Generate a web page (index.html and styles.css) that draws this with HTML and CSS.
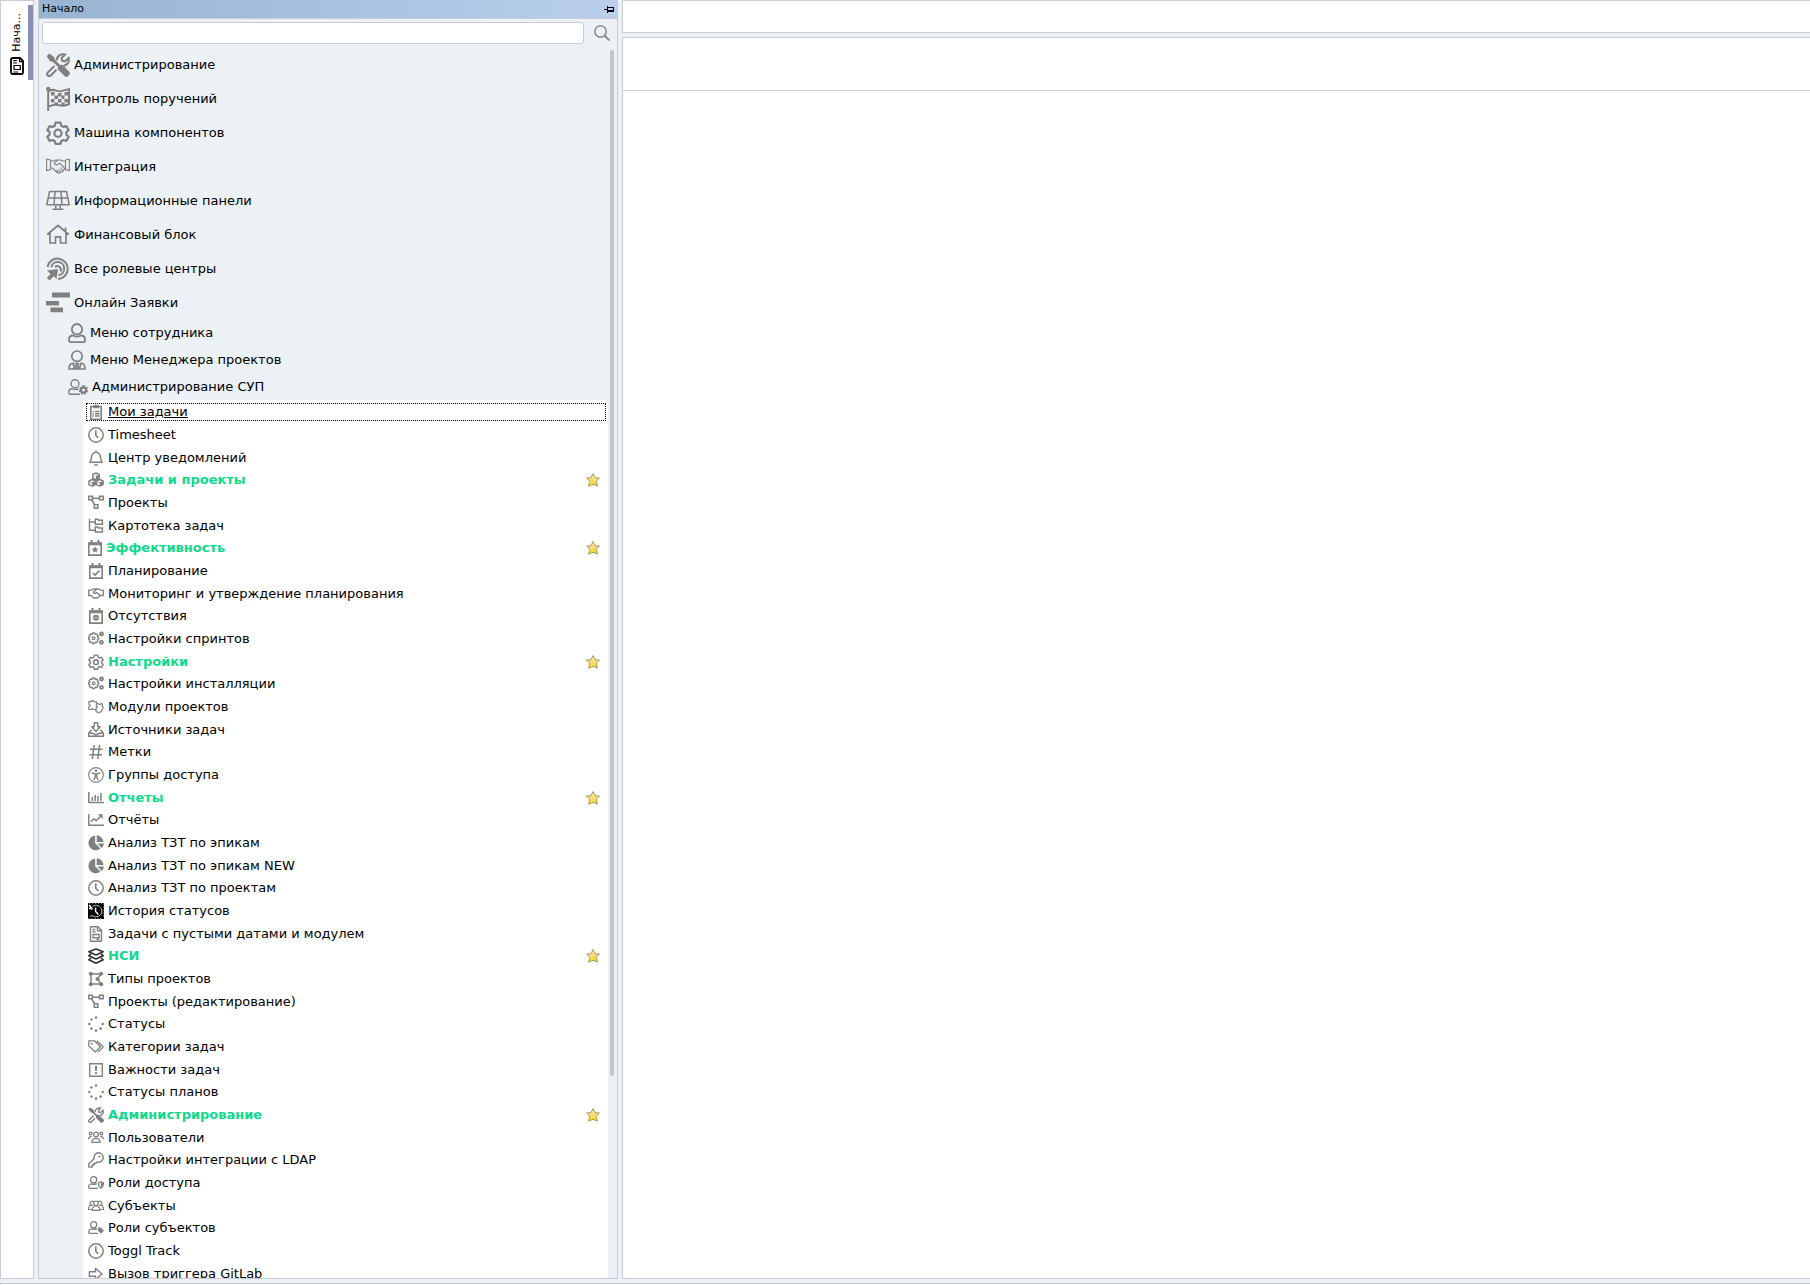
FILE: index.html
```html
<!DOCTYPE html>
<html lang="ru">
<head>
<meta charset="utf-8">
<title>Начало</title>
<link rel="stylesheet" href="styles.css">
</head>
<body>
<svg class="sprite" aria-hidden="true">
  <symbol id="tools" viewBox="0 0 24 24"><path fill="currentColor" stroke="none" d="M.6 3.200L3.200.6l5 3.400.9 3 5 5c1-.6 2.200-.3 3 .4l6 6a2.500 2.500 0 0 1 0 3.600l-1 1a2.500 2.500 0 0 1-3.600 0l-6-6c-.8-.8-1-2-.4-3L7 9l-3-.9z"/><path fill="none" stroke="currentColor" stroke-width="2.100" d="M10.800 7.500C10.400 3.600 14.400.2 19 1.600L15.600 5l.6 2.800 2.800.6L22.600 5c1.200 4.500-2 7.600-5.200 7.600M8.300 13l-6.500 6.400a2.100 2.100 0 0 0 3 3l5.700-5.600"/></symbol>
  <symbol id="flag" viewBox="0 0 24 24"><circle cx="2.200" cy="2" r="2.200" fill="currentColor" stroke="none"/><path fill="none" stroke="currentColor" stroke-width="2" d="M2.200 2v22M3 4c5-3.500 8 1.500 12 .2 3-.8 4.500-1.700 8-2v15c-4 1.500-6 2.200-9 1.200-4-1.300-7-.8-11 1"/><path fill="currentColor" stroke="none" d="M5 5h3.500v3.500H5zM12 6h3.500v3.500H12zM18.500 5H22v3.500h-3.500zM8.500 8.500H12V12H8.500zM15.500 8.500h3V12h-3zM5 12h3.500v3.500H5zM12 12h3.500v3.500H12zM18.500 12H22v3.500h-3.500zM8.500 15.500H12V18H8.500zM15.500 15.500h3V18h-3z"/></symbol>
  <symbol id="gear" viewBox="0 0 24 24"><path fill="none" stroke="currentColor" stroke-width="2.200" stroke-linejoin="round" d="M9.500 1.700h5l.7 3 2 1.200 3.100-.9 2.400 4.200-2.300 2v2.400l2.300 2.100-2.400 4.200-3.100-.9-2 1.200-.7 2.600h-5l-.7-2.600-2-1.200-3.100.9-2.400-4.200 2.300-2.100v-2.400l-2.300-2L3.700 5l3.100.9 2-1.200z"/><circle cx="12" cy="12.200" r="3.600" fill="none" stroke="currentColor" stroke-width="2.200"/></symbol>
  <symbol id="shake" viewBox="0 0 24 24"><path fill="none" stroke="currentColor" stroke-width="1.100" stroke-linejoin="round" d="M.6 4l3.900 1v9.600l-3.900 1zM23.400 4l-3.900 1v9.600l3.900 1zM4.500 6h3l2.200-1h5L16.500 6h3M4.500 13h2l4.500 4.500 2 .6 1.500-.5 1.600-.8 1.400-1.300 1-2h1.500M11.500 5.200L8.300 8.400c.4 2.200 3 2.200 4.500.2l1.200-.2 4.500 4.600M10.500 15l1.500 2M12.500 14l2 3M14.500 12.500l2 3"/></symbol>
  <symbol id="solar" viewBox="0 0 24 24"><path fill="none" stroke="currentColor" stroke-width="1.500" stroke-linejoin="round" d="M3.500 2.500h17l2.700 13.300H.8zM2.300 9h19.400M9 2.500l-1 13M15 2.500l1 13M9.800 16v4M14.200 16v4M6.500 20.300h11"/></symbol>
  <symbol id="home" viewBox="0 0 24 24"><path fill="none" stroke="currentColor" stroke-width="1.700" stroke-linejoin="round" d="M1.200 11.500L12 2.500l10.800 9M4 9.500v10.500h5.500v-6.200h5V20H20V9.500M19.500 9V4.500"/></symbol>
  <symbol id="target" viewBox="0 0 24 24"><path fill="none" stroke="currentColor" stroke-width="2" d="M1.500 10A10.200 10.200 0 1 1 12 22M5.200 10.200a6.600 6.600 0 1 1 7.400 8M9 10a3.600 3.600 0 0 1 5.500 4.500"/><path fill="currentColor" stroke="none" d="M1 13.500l11-1.500-1.500 10-2.700-2.800L3.500 23.500.8 20.800 4.600 17z"/></symbol>
  <symbol id="bars" viewBox="0 0 24 24"><path fill="currentColor" stroke="none" d="M6 1.500h18v5H6zM0 10h13v4.600H0zM4.500 16.600H17v4.600H4.500z"/></symbol>
  <symbol id="user" viewBox="0 0 18 20"><path fill="none" stroke="currentColor" stroke-width="1.800" d="M9 1a4.600 4.600 0 0 1 0 10.400A4.600 4.600 0 0 1 9 1zM5.500 12.500c2.200 1.400 4.800 1.400 7 0 2.500 0 4.600 1.500 4.600 4.200 0 1.500-.7 2.400-1.600 2.400h-13c-.9 0-1.600-.9-1.600-2.400 0-2.700 2.100-4.200 4.600-4.200z"/></symbol>
  <symbol id="manager" viewBox="0 0 18 20"><path fill="none" stroke="currentColor" stroke-width="1.700" stroke-linejoin="round" d="M9 1a4.600 4.600 0 0 1 0 10.400A4.600 4.600 0 0 1 9 1zM5 13c-3 .4-4 2-4 6h5.600zM13 13c3 .4 4 2 4 6h-5.600zM7.500 13.500h3l-.8 2.300.8 3.200h-3l.8-3.200z"/></symbol>
  <symbol id="usergear" viewBox="0 0 20 16"><path fill="none" stroke="currentColor" stroke-width="1.400" d="M7 .8a3.600 3.600 0 0 1 0 8A3.600 3.600 0 0 1 7 .8zM10.500 10c-1 0-2 .5-3.500.5S5 9.600 3.500 9.800C1.600 10.200.7 11.700.7 13.500c0 1 .4 1.700 1.200 1.700h10"/><circle cx="15.500" cy="11" r="2.600" fill="none" stroke="currentColor" stroke-width="2.200"/><path stroke="currentColor" stroke-width="1.600" stroke-dasharray="1.600 1.700" fill="none" d="M15.500 7a4 4 0 0 1 0 8 4 4 0 0 1 0-8z"/></symbol>
  <symbol id="clip" viewBox="0 0 16 16"><path fill="none" stroke="currentColor" stroke-width="1.600" d="M2.800 2.500h10.400v12.700H2.800zM7 7.500h4.500M7 9.800h4.500M7 12h4.500M4.600 7.500H6M4.600 9.800H6M4.600 12H6"/><path fill="currentColor" d="M5 1.300h1.800a1.300 1.300 0 0 1 2.400 0H11v3H5z"/></symbol>
  <symbol id="clock" viewBox="0 0 16 16"><circle cx="8" cy="8" r="7.200" fill="none" stroke="currentColor" stroke-width="1.500"/><path fill="none" stroke="currentColor" stroke-width="1.600" d="M7.800 3.300v5.200l2.600 2.300"/></symbol>
  <symbol id="bell" viewBox="0 0 16 16"><path fill="none" stroke="currentColor" stroke-width="1.500" stroke-linejoin="round" d="M8 .5v2M1.800 12.200h12.400C12.800 10.800 12.500 9.500 12.500 7A4.500 4.500 0 0 0 8 2.300 4.500 4.500 0 0 0 3.500 7c0 2.500-.3 3.800-1.700 5.200zM6.400 14.200c.6 1.300 2.600 1.300 3.200 0"/></symbol>
  <symbol id="cubes" viewBox="0 0 16 16"><path fill="#fff" stroke="currentColor" stroke-width="1.500" stroke-linejoin="round" d="M8 1l3.200 1.400v3.700L8 7.600 4.800 6.100V2.400zM4.200 7.500l3.300 1.400v3.700l-3.300 1.600L.9 12.600V8.900zM11.800 7.500l3.300 1.400v3.700l-3.300 1.600-3.300-1.600V8.900z"/><path fill="currentColor" d="M4.800 2.500L8 4l3.200-1.500v3.600L8 4.500zM8 4l3.200-1.500v3.600L8 7.600zM4.200 10.300l3.300-1.400v3.700l-3.300 1.600zM11.800 10.300l3.300-1.400v3.700l-3.300 1.600zM.9 8.800l3.300 1.500v1.300zM8.500 8.800l3.300 1.500v1.300z"/></symbol>
  <symbol id="nodes" viewBox="0 0 16 16"><path fill="none" stroke="currentColor" stroke-width="1.500" d="M.8 1.300h3.600v3.400H.8zM11.600 1.300h3.600v3.400h-3.600zM6.200 9.800h3.600v3.400H6.200zM4.200 3.200h7.600M3.400 4.800L7 10"/></symbol>
  <symbol id="tree" viewBox="0 0 16 16"><path fill="none" stroke="currentColor" stroke-width="1.400" d="M1.500.8v11.400H7M1.500 4H7M7.300 1.300h2.400l1 1h3.700v4H7.300zM7.300 9h2.400l1 1h3.700v4H7.300z"/></symbol>
  <symbol id="calendar" viewBox="0 0 16 16"><path fill="none" stroke="currentColor" stroke-width="1.600" d="M1.800 3.500h12.400v11.600H1.800z"/><path fill="currentColor" d="M1 2.300h14v2.900H1zM3.500 0h2v3h-2zM10.500 0h2v3h-2z"/></symbol>
  <symbol id="calstar" viewBox="1 0 14 16"><use href="#calendar" width="16" height="16"/><path fill="currentColor" d="M8 6.300l1 2.200 2.400.3-1.800 1.600.5 2.400L8 11.600l-2.100 1.200.5-2.400-1.800-1.600L7 8.500z"/></symbol>
  <symbol id="calcheck" viewBox="0 0 16 16"><use href="#calendar" width="16" height="16"/><path fill="none" stroke="currentColor" stroke-width="1.600" d="M4.800 9.800l2.200 2.200 4.400-4.400"/></symbol>
  <symbol id="calminus" viewBox="0 0 16 16"><use href="#calendar" width="16" height="16"/><circle cx="8" cy="9.800" r="3" fill="currentColor"/><path stroke="#ddd" d="M6.500 9.800h3"/></symbol>
  <symbol id="shakesm" viewBox="0 0 16 16"><path fill="none" stroke="currentColor" stroke-width="1.300" stroke-linejoin="round" d="M.7 3.500v6.700M15.300 3.500v6.700M1 4.300l2.200-.2L5.500 3h5l2.300 1.100 2.200.2M1 9.500h2L6 12h3.500l3.300-2.500H15M8.800 3.200L5.500 5.900c0 1.700 1.900 1.700 3.300.6l3.500 3.200"/></symbol>
  <symbol id="gears" viewBox="0 0 16 16"><path fill="none" stroke="currentColor" stroke-width="1.400" stroke-linejoin="round" d="M4.700 2h1.900l.5 1.300 1.300-.3 1.500 1.500-.5 1.300 1.100.6v1.800l-1.100.6.5 1.400-1.400 1.400-1.400-.3-.6 1.200H4.700l-.6-1.200-1.400.3-1.400-1.400.5-1.400-1.100-.6V6.400l1.100-.6-.5-1.300L2.800 3l1.300.3z"/><circle cx="5.600" cy="7.300" r="1.400" fill="none" stroke="currentColor" stroke-width="1.200"/><g fill="none" stroke="currentColor" stroke-width="1.800"><circle cx="13.500" cy="3" r="1.500"/><circle cx="13.500" cy="11.300" r="1.500"/></g></symbol>
  <symbol id="puzzle" viewBox="0 0 16 16"><path fill="none" stroke="currentColor" stroke-width="1.200" stroke-linejoin="round" d="M8 10.500H5l-.8-1-1.200 1H.8V7.800l1.400-.6-.6-1.500-.8-.4V2.600h2.500L4 1.400l1.500.2.4 1.200h2.600v1.900M8.400 4.700l2-.2.5 1h1.400l.6-1.200 1.400.8v2.400l.8.8-.3 1.500-.8.600-.4 2.200-2 .6-.6.6h-1.200l-.5-1-1.300-.2V9.300l1.200-.6-.2-1.500H8.300z"/></symbol>
  <symbol id="inbox" viewBox="0 0 16 16"><path fill="none" stroke="currentColor" stroke-width="1.400" stroke-linejoin="round" d="M6.300.8h3.400v4h2.500L8 9.500 3.800 4.800h2.500zM4 8.500H2.800L.7 11.200v3h14.600v-3l-2.100-2.700H12M.7 11.300h4.600l1 1.200h3.400l1-1.200h4.600"/></symbol>
  <symbol id="hash" viewBox="0 0 16 16"><path fill="none" stroke="currentColor" stroke-width="1.500" d="M6.200 1L4.400 15M11.600 1L9.800 15M2 5.300h12.500M1.500 10.700H14"/></symbol>
  <symbol id="access" viewBox="0 0 16 16"><circle cx="8" cy="8" r="7.300" fill="none" stroke="currentColor" stroke-width="1.200"/><circle cx="8" cy="3.800" r="1.300" fill="currentColor"/><path fill="none" stroke="currentColor" stroke-width="1.500" d="M3.800 6.100l4.200.8 4.200-.8M7.400 6.500v3.300l-1.600 3M8.600 6.500v3.300l1.600 3"/></symbol>
  <symbol id="chart" viewBox="0 0 16 16"><path fill="none" stroke="currentColor" stroke-width="1.500" d="M.8 2v10.500H16M4.300 7v4M7.200 5v6M10 6v5M12.900 3v8"/></symbol>
  <symbol id="line" viewBox="0 0 16 16"><path fill="none" stroke="currentColor" stroke-width="1.500" d="M.8 2v11.300H16M2.800 9.800L6 6.700l2.200 2L13 4"/><path fill="currentColor" d="M10 2.300h4.700V7z"/></symbol>
  <symbol id="pie" viewBox="0 0 16 16"><path fill="currentColor" d="M7.200.8v7.400l5.200 5.200A7.200 7.200 0 1 1 7.200.8zM8.700.3a7 7 0 0 1 6.700 6.800H8.700zM9.500 8.500H16a7 7 0 0 1-2.500 4.500z"/></symbol>
  <symbol id="history" viewBox="0 0 16 16"><path fill="#000" d="M0 0h16v16H0z"/><path fill="none" stroke="#ccc" stroke-width="1" d="M4.500 3.500a6 6 0 0 1 9.300 3.500 6 6 0 0 1-9.800 5.500L2 13.500"/><path fill="none" stroke="#fff" stroke-width="1.400" d="M7.600 4.500v4l2.800 3M1.300 2l3 4.500M1 5.500h3.500"/><path stroke="#999" stroke-dasharray="1 2" d="M.5 15.500h15M15.500.5v15M1 .5h15"/></symbol>
  <symbol id="doc" viewBox="0 0 16 16"><path fill="none" stroke="currentColor" stroke-width="1.400" stroke-linejoin="round" d="M2.500.8H10l3.500 3.500v10.900h-11zM9.500 1v3.800h4M4.500 3.500h3M4.500 5.800h3M5 8.500h6.200v3.200H5zM8.500 13.400h3"/></symbol>
  <symbol id="layers" viewBox="0 0 16 16"><path fill="none" stroke="#333" stroke-width="1.600" stroke-linejoin="round" d="M8 .9l7.200 2.900L8 6.900.8 3.800zM3 6L.8 7.700 8 11l7.200-3.300L13 6M3 10L.8 11.800 8 15.200l7.200-3.400L13 10"/></symbol>
  <symbol id="poly" viewBox="0 0 16 16"><path fill="none" stroke="currentColor" stroke-width="1.500" d="M3 3h10L9.500 8l3.500 5H3z"/><g fill="currentColor"><circle cx="2.800" cy="2.800" r="2"/><circle cx="13.200" cy="2.800" r="2"/><circle cx="9.500" cy="8" r="2"/><circle cx="2.800" cy="13.200" r="2"/><circle cx="13.200" cy="13.200" r="2"/></g></symbol>
  <symbol id="spinner" viewBox="0 0 16 16"><g fill="currentColor"><circle cx="8" cy="1.500" r="1.200"/><circle cx="3.400" cy="3.400" r="1.200"/><circle cx="1.300" cy="8" r="1.200"/><circle cx="3.400" cy="12.600" r="1.300"/><circle cx="8" cy="14.600" r="1.300"/><circle cx="12.600" cy="12.600" r="1.300"/><circle cx="14.700" cy="8" r="1.200"/></g></symbol>
  <symbol id="tags" viewBox="0 0 16 16"><path fill="none" stroke="currentColor" stroke-width="1.300" stroke-linejoin="round" d="M.8 1.800h5.700l6 6L7.300 13 .8 6.900zM8.800 1.800l6.500 6.100-5 5.100"/><circle cx="3.700" cy="4.700" r="1" fill="currentColor"/></symbol>
  <symbol id="alert" viewBox="0 0 16 16"><path fill="none" stroke="currentColor" stroke-width="1.400" d="M1.700 1.700h12.600v12.600H1.700z"/><path fill="currentColor" d="M6.800 4h2.400l-.4 5H7.200zM7 10h2v2H7z"/></symbol>
  <symbol id="users" viewBox="0 0 16 16"><g fill="none" stroke="currentColor" stroke-width="1.300"><circle cx="8" cy="4.500" r="2.300"/><circle cx="2.700" cy="3.500" r="1.400"/><circle cx="13.300" cy="3.500" r="1.400"/><path d="M4 12.300c0-2.800 1.300-3.900 4-3.900s4 1.100 4 3.900zM.6 9.200c0-1.900.8-2.600 3.200-2.500M15.400 9.200c0-1.900-.8-2.600-3.200-2.500"/></g></symbol>
  <symbol id="group" viewBox="0 0 16 16"><g fill="none" stroke="currentColor" stroke-width="1.200"><path d="M8 3a2.300 2.300 0 0 1 0 4.600A2.300 2.300 0 0 1 8 3zM4.300 12.300c0-3.200 1-4.300 3.700-4.300s3.700 1.100 3.700 4.300zM5.300 6.800a2 2 0 1 1 .3-3M10.700 6.800a2 2 0 1 0-.3-3M4 11.500H.6c0-3 .5-4 2.400-4.300M12 11.500h3.400c0-3-.5-4-2.400-4.300"/></g></symbol>
  <symbol id="key" viewBox="0 0 16 16"><path fill="none" stroke="currentColor" stroke-width="1.400" stroke-linejoin="round" d="M10.500.8a4.700 4.700 0 1 1-1.300 9.200L7.800 11.300H6v1.700H4.300v2.100H.8v-3.200l5.400-5.400A4.700 4.700 0 0 1 10.500.8z"/><circle cx="11.500" cy="4.500" r="1.100" fill="currentColor"/></symbol>
  <symbol id="person" viewBox="0 0 16 16"><path fill="none" stroke="currentColor" stroke-width="1.300" d="M5.600 1.700a2.900 2.900 0 0 1 0 6.200 2.900 2.900 0 0 1 0-6.200zM9 8.800c-1 0-1.700.5-3.400.5S3.500 8.700 2.500 9C1.200 9.400.7 10.500.7 12c0 .9.300 1.300.9 1.300H10"/></symbol>
  <symbol id="shield" viewBox="0 0 16 16"><use href="#person" width="16" height="16"/><path fill="none" stroke="currentColor" stroke-width="1.200" d="M13 6.700l2.500 1c0 3-.8 4.600-2.500 5.600-1.700-1-2.500-2.600-2.500-5.600z"/><path fill="currentColor" d="M13 7v6c1.400-.9 2-2.600 2-5z"/></symbol>
  <symbol id="persontag" viewBox="0 0 16 16"><use href="#person" width="16" height="16"/><path fill="currentColor" d="M9.800 7.500h3l3.200 3.200-3 3-3.200-3.100z"/></symbol>
  <symbol id="arrow" viewBox="0 0 16 16"><path fill="none" stroke="currentColor" stroke-width="1.400" stroke-linejoin="round" d="M1.300 5.800h6.200V2.300L14 8l-6.500 5.700v-3.500H1.300z"/></symbol>
  <linearGradient id="gold" x1="0" y1="0" x2="0" y2="1"><stop offset="0" stop-color="#fdf0b0"/><stop offset=".5" stop-color="#f8dc72"/><stop offset="1" stop-color="#fbd60a"/></linearGradient>
  <symbol id="star" viewBox="0 0 14 14"><path fill="url(#gold)" stroke="#a89a68" stroke-width="1" stroke-linejoin="round" d="M7 .6l2 4 4.500.5-3.300 3.100 1.300 5L7 11.300l-4.500 1.900 1.300-5L.5 5.100 5 4.600z"/></symbol>
</svg>

<div class="app">
  <nav class="rail" aria-label="Вкладки">
    <button class="rail-tab" type="button">
      <span class="rail-label">Нача...</span>
      <svg class="rail-icon" viewBox="0 0 14 18"><path fill="none" stroke="#000" stroke-width="1.800" stroke-linejoin="round" d="M3 1h7l3 3v11.500c0 .8-.7 1.500-1.500 1.500H2.500C1.700 17 1 16.300 1 15.500V3c0-1.100.9-2 2-2z"/><path fill="none" stroke="#000" stroke-width="1.200" d="M9.500 1v3.700H13M3.200 3.600h3.600M3.200 6h3.600M4 8.500h6.300v4H4zM3.200 15h5"/></svg>
    </button>
  </nav>

  <aside class="panel">
    <header class="panel-head">
      <h1 class="panel-title">Начало</h1>
      <button class="pin" type="button" aria-label="Закрепить"><svg viewBox="0 0 10 7"><path fill="#000" d="M0 3h3V0h1v1h6v5H4v1H3V4H0zM4 2v2h5V2z"/></svg></button>
    </header>
    <form class="search">
      <input class="search-box" type="text" aria-label="Поиск">
      <button class="search-go" type="button" aria-label="Найти"><svg viewBox="0 0 16 16"><circle cx="6.500" cy="6.500" r="5.700" fill="none" stroke="#888" stroke-width="1.500"/><path stroke="#888" stroke-width="1.800" d="M10.500 10.500l5 5"/></svg></button>
    </form>
    <div class="scroller">
      <div class="menu">
        <ul class="level-1">
          <li><a href="#"><svg><use href="#tools"/></svg>Администрирование</a></li>
          <li><a href="#"><svg><use href="#flag"/></svg>Контроль поручений</a></li>
          <li><a href="#"><svg><use href="#gear"/></svg>Машина компонентов</a></li>
          <li><a href="#"><svg><use href="#shake"/></svg>Интеграция</a></li>
          <li><a href="#"><svg><use href="#solar"/></svg>Информационные панели</a></li>
          <li><a href="#"><svg><use href="#home"/></svg>Финансовый блок</a></li>
          <li><a href="#"><svg><use href="#target"/></svg>Все ролевые центры</a></li>
          <li><a href="#"><svg><use href="#bars"/></svg>Онлайн Заявки</a></li>
        </ul>
        <ul class="level-2">
          <li><a href="#"><svg><use href="#user"/></svg>Меню сотрудника</a></li>
          <li><a href="#"><svg><use href="#manager"/></svg>Меню Менеджера проектов</a></li>
          <li><a href="#"><svg class="wide"><use href="#usergear"/></svg>Администрирование СУП</a></li>
        </ul>
        <ul class="level-3">
          <li><a class="current" href="#"><svg><use href="#clip"/></svg><span>Мои задачи</span></a></li>
          <li><a href="#"><svg><use href="#clock"/></svg>Timesheet</a></li>
          <li><a href="#"><svg><use href="#bell"/></svg>Центр уведомлений</a></li>
          <li><a class="group" href="#"><svg><use href="#cubes"/></svg>Задачи и проекты<svg class="star"><use href="#star"/></svg></a></li>
          <li><a href="#"><svg><use href="#nodes"/></svg>Проекты</a></li>
          <li><a href="#"><svg><use href="#tree"/></svg>Картотека задач</a></li>
          <li><a class="group" href="#"><svg class="narrow"><use href="#calstar"/></svg>Эффективность<svg class="star"><use href="#star"/></svg></a></li>
          <li><a href="#"><svg><use href="#calcheck"/></svg>Планирование</a></li>
          <li><a href="#"><svg><use href="#shakesm"/></svg>Мониторинг и утверждение планирования</a></li>
          <li><a href="#"><svg><use href="#calminus"/></svg>Отсутствия</a></li>
          <li><a href="#"><svg><use href="#gears"/></svg>Настройки спринтов</a></li>
          <li><a class="group" href="#"><svg><use href="#gear"/></svg>Настройки<svg class="star"><use href="#star"/></svg></a></li>
          <li><a href="#"><svg><use href="#gears"/></svg>Настройки инсталляции</a></li>
          <li><a href="#"><svg><use href="#puzzle"/></svg>Модули проектов</a></li>
          <li><a href="#"><svg><use href="#inbox"/></svg>Источники задач</a></li>
          <li><a href="#"><svg><use href="#hash"/></svg>Метки</a></li>
          <li><a href="#"><svg><use href="#access"/></svg>Группы доступа</a></li>
          <li><a class="group" href="#"><svg><use href="#chart"/></svg>Отчеты<svg class="star"><use href="#star"/></svg></a></li>
          <li><a href="#"><svg><use href="#line"/></svg>Отчёты</a></li>
          <li><a href="#"><svg><use href="#pie"/></svg>Анализ ТЗТ по эпикам</a></li>
          <li><a href="#"><svg><use href="#pie"/></svg>Анализ ТЗТ по эпикам NEW</a></li>
          <li><a href="#"><svg><use href="#clock"/></svg>Анализ ТЗТ по проектам</a></li>
          <li><a href="#"><svg><use href="#history"/></svg>История статусов</a></li>
          <li><a href="#"><svg><use href="#doc"/></svg>Задачи с пустыми датами и модулем</a></li>
          <li><a class="group" href="#"><svg><use href="#layers"/></svg>НСИ<svg class="star"><use href="#star"/></svg></a></li>
          <li><a href="#"><svg><use href="#poly"/></svg>Типы проектов</a></li>
          <li><a href="#"><svg><use href="#nodes"/></svg>Проекты (редактирование)</a></li>
          <li><a href="#"><svg><use href="#spinner"/></svg>Статусы</a></li>
          <li><a href="#"><svg><use href="#tags"/></svg>Категории задач</a></li>
          <li><a href="#"><svg><use href="#alert"/></svg>Важности задач</a></li>
          <li><a href="#"><svg><use href="#spinner"/></svg>Статусы планов</a></li>
          <li><a class="group" href="#"><svg><use href="#tools"/></svg>Администрирование<svg class="star"><use href="#star"/></svg></a></li>
          <li><a href="#"><svg><use href="#users"/></svg>Пользователи</a></li>
          <li><a href="#"><svg><use href="#key"/></svg>Настройки интеграции с LDAP</a></li>
          <li><a href="#"><svg><use href="#shield"/></svg>Роли доступа</a></li>
          <li><a href="#"><svg><use href="#group"/></svg>Субъекты</a></li>
          <li><a href="#"><svg><use href="#persontag"/></svg>Роли субъектов</a></li>
          <li><a href="#"><svg><use href="#clock"/></svg>Toggl Track</a></li>
          <li><a href="#"><svg><use href="#arrow"/></svg>Вызов триггера GitLab</a></li>
        </ul>
      </div>
      <div class="thumb"></div>
    </div>
  </aside>

  <main class="work">
    <div class="work-bar"></div>
    <div class="work-body"><div class="work-tools"></div></div>
  </main>
</div>
<footer class="status"></footer>
</body>
</html>
```
FILE: styles.css
```css
* { box-sizing: border-box; }

body {
  margin: 0;
  height: 100vh;
  display: flex;
  flex-direction: column;
  gap: 4px;
  overflow: hidden;
  background: #edf1f6;
  color: #000;
  font: 13px/16px Verdana, "DejaVu Sans", sans-serif;
}

ul { list-style: none; margin: 0; padding: 0; }
a { color: inherit; text-decoration: none; }
button { padding: 0; border: 0; background: none; font: inherit; color: inherit; }
svg { display: block; flex: none; }
.sprite { position: absolute; width: 0; height: 0; }

.app {
  flex: 1;
  min-height: 0;
  display: grid;
  grid-template-columns: 34px 580px 1fr;
  gap: 4px;
}

/* Left rail with the vertical tab */
.rail { border: 1px solid #c9ccd6; background: #fff; }
.rail-tab {
  width: 100%;
  height: 75px;
  margin-top: 4px;
  padding: 8px 0 5px 9px;
  border-right: 5px solid #8b8fb5;
  display: flex;
  flex-direction: column;
  justify-content: flex-end;
  align-items: flex-start;
  gap: 5px;
}
.rail-label {
  writing-mode: vertical-rl;
  transform: rotate(180deg);
  font-size: 11px;
  line-height: 14px;
}
.rail-icon { width: 14px; height: 18px; }

/* Menu panel */
.panel {
  min-height: 0;
  display: flex;
  flex-direction: column;
  border: 1px solid #c9ccd6;
  border-top: 0;
  background: #ecf1f6;
}
.panel-head {
  flex: none;
  height: 19px;
  padding: 0 3px;
  display: flex;
  align-items: center;
  justify-content: space-between;
  border-bottom: 1px solid #c9ccd6;
  background: linear-gradient(90deg, #98b3d1, #b9cfec);
}
.panel-title { margin: 0; font-size: 11px; line-height: 16px; font-weight: 400; }
.pin svg { width: 10px; height: 7px; }

.search { flex: none; display: flex; align-items: center; gap: 10px; padding: 3px 7px 3px 3px; }
.search-box {
  flex: 1;
  height: 22px;
  border: 1px solid #c9ccd6;
  border-radius: 3px;
  background: #fff;
  font: inherit;
}
.search-go svg { width: 16px; height: 16px; }

.scroller { flex: 1; min-height: 0; display: flex; gap: 2px; padding-right: 3px; overflow: hidden; }
.menu { flex: 1; }
.thumb {
  width: 4px;
  height: calc(100% * 5 / 6);
  margin-top: 3px;
  border-radius: 2px;
  background: #c5c5c5;
}

.menu svg { color: #808080; }
.menu a { display: flex; align-items: center; }

.level-1 a { height: 34px; padding: 1px 0 0 7px; gap: 4px; }
.level-1 svg { width: 24px; height: 24px; }

.level-2 a { height: 27px; padding-left: 29px; gap: 4px; }
.level-2 svg { width: 18px; height: 20px; }
.level-2 .wide { width: 20px; height: 16px; }

.level-3 { margin-left: 44px; background: #fff; }
.level-3 li { height: 23px; padding: 3px 2px 0 3px; }
.level-3 li:nth-child(3n) { height: 22px; }
.level-3 a { height: 18px; gap: 4px; padding: 0 5px 0 1px; border: 1px solid transparent; }
.level-3 svg { width: 16px; height: 16px; }
.level-3 .narrow { width: 14px; }
.level-3 .star { width: 14px; height: 14px; margin-left: auto; }
.level-3 .current { border: 1px dotted #000; }
.current span { text-decoration: underline; }
.group { color: #0fd98c; font-weight: 700; }

/* Work area */
.work { display: flex; flex-direction: column; gap: 4px; min-width: 0; }
.work-bar { height: 33px; border: 1px solid #c9ccd6; border-right: 0; background: #fff; }
.work-body { flex: 1; border: 1px solid #c9ccd6; border-right: 0; background: #fff; }
.work-tools { height: 53px; border-bottom: 1px solid #c9ccd6; }

.status { height: 2px; border-top: 1px solid #c9ccd6; border-left: 1px solid #c9ccd6; background: #fff; }
```
